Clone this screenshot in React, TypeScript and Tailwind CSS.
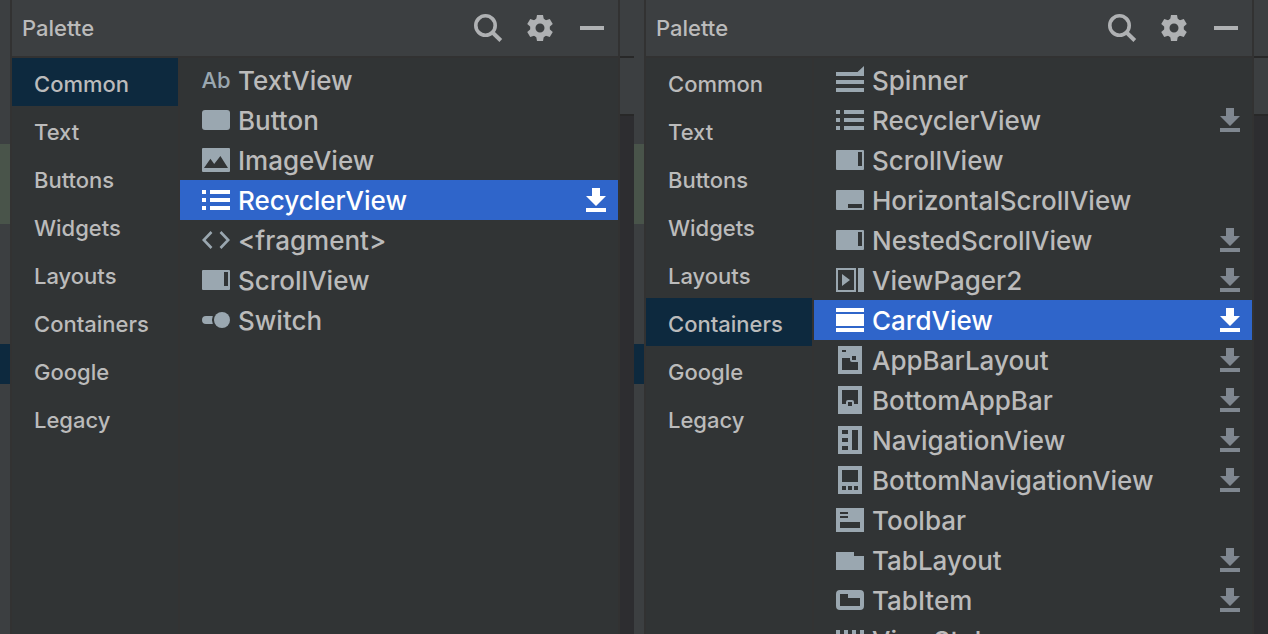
import { useState } from 'react';
import type { ReactNode } from 'react';

type Item = { name: string; icon: string; download?: boolean };

const categories = ['Common', 'Text', 'Buttons', 'Widgets', 'Layouts', 'Containers', 'Google', 'Legacy'];

const commonItems: Item[] = [
  { name: 'TextView', icon: 'text' },
  { name: 'Button', icon: 'button' },
  { name: 'ImageView', icon: 'image' },
  { name: 'RecyclerView', icon: 'recycler', download: true },
  { name: '<fragment>', icon: 'fragment' },
  { name: 'ScrollView', icon: 'scroll' },
  { name: 'Switch', icon: 'switch' },
];

const containerItems: Item[] = [
  { name: 'Spinner', icon: 'spinner' },
  { name: 'RecyclerView', icon: 'recycler', download: true },
  { name: 'ScrollView', icon: 'scroll' },
  { name: 'HorizontalScrollView', icon: 'horizontal' },
  { name: 'NestedScrollView', icon: 'scroll', download: true },
  { name: 'ViewPager2', icon: 'pager', download: true },
  { name: 'CardView', icon: 'card', download: true },
  { name: 'AppBarLayout', icon: 'appbar', download: true },
  { name: 'BottomAppBar', icon: 'bottombar', download: true },
  { name: 'NavigationView', icon: 'navigation', download: true },
  { name: 'BottomNavigationView', icon: 'bottomnav', download: true },
  { name: 'Toolbar', icon: 'toolbar' },
  { name: 'TabLayout', icon: 'tablayout', download: true },
  { name: 'TabItem', icon: 'tabitem', download: true },
  { name: 'ViewStub', icon: 'stub' },
];

// Component glyphs, all on a 32x32 grid. Holes are cut with the evenodd rule.
const glyphs: Record<string, ReactNode> = {
  button: <rect x="2" y="6" width="28" height="20" rx="3" />,
  image: <path d="M3 4h26a1 1 0 0 1 1 1v22a1 1 0 0 1-1 1H3a1 1 0 0 1-1-1V5a1 1 0 0 1 1-1zM4 24h24l-7.600-12-6.200 8-3.800-5.200z" />,
  recycler: <path d="M2 6h4v4H2zM10 6h20v4H10zM2 14h4v4H2zM10 14h20v4H10zM2 22h4v4H2zM10 22h20v4H10z" />,
  fragment: <path d="M11.500 8 3.800 16l7.700 8M20.500 8l7.700 8-7.700 8" fill="none" stroke="currentColor" strokeWidth="2.600" />,
  scroll: <path d="M3 6h26a1 1 0 0 1 1 1v18a1 1 0 0 1-1 1H3a1 1 0 0 1-1-1V7a1 1 0 0 1 1-1zM24 8v14h4V8z" />,
  horizontal: <path d="M3 6h26a1 1 0 0 1 1 1v18a1 1 0 0 1-1 1H3a1 1 0 0 1-1-1V7a1 1 0 0 1 1-1zM14 20v4h14v-4z" />,
  switch: (
    <>
      <path d="M6 12h6.800a10 10 0 0 0 0 8H6a4 4 0 0 1 0-8z" />
      <circle cx="22" cy="16" r="8" />
    </>
  ),
  spinner: <path d="M2 8h21.500L30 2v10H2zM2 16h28v4H2zM2 24h28v4H2z" />,
  pager: <path d="M2 4h20v24H2zM4 6v20h16V6zM8 10l8 6-8 6zM24 4h6v24h-6z" />,
  card: <path d="M2 4h28v4H2zM2 10h28v12H2zM2 24h28v4H2z" />,
  appbar: <path d="M4 2h24v28H4zM8 6v2h4V6zM8 14v12h16v-8h-6a2 2 0 0 1-2-2v-2zM18 12v4h4v-4z" />,
  bottombar: <path d="M4 2h24v28H4zM8 6v14h4v-2a2 2 0 0 1 2-2h4a2 2 0 0 1 2 2v2h4V6zM14 18v4h4v-4z" />,
  navigation: <path d="M4 2h24v28H4zM8 6v4h6V6zM8 14v4h6v-4zM8 22v4h6v-4zM18 6v20h6V6z" />,
  bottomnav: <path d="M4 2h24v28H4zM8 6v12h16V6zM8 22v4h4v-4zM14 22v4h4v-4zM20 22v4h4v-4z" />,
  toolbar: <path d="M2 4h28v24H2zM6 8v2h8V8zM6 12v2h8v-2zM6 18v6h20v-6z" />,
  tablayout: <path d="M2 8h18v4h10v14H2z" />,
  tabitem: <path d="M6 6h20a4 4 0 0 1 4 4v12a4 4 0 0 1-4 4H6a4 4 0 0 1-4-4V10a4 4 0 0 1 4-4zM6 10v12h20v-8H14v-4z" />,
  stub: <path d="M2 6h4v20H2zM10 6h4v20h-4zM18 6h4v20h-4zM26 6h4v20h-4z" />,
};

function Icon({ children }: { children: ReactNode }) {
  return (
    <svg viewBox="0 0 32 32" className="size-8 shrink-0" fill="currentColor" fillRule="evenodd" aria-hidden="true">
      {children}
    </svg>
  );
}

function ItemIcon({ icon }: { icon: string }) {
  if (icon === 'text') {
    return <span className="flex size-8 shrink-0 items-center justify-center text-[22px]" aria-hidden="true">Ab</span>;
  }
  return <Icon>{glyphs[icon]}</Icon>;
}

function PaletteHeader() {
  return (
    <header className="flex h-14 shrink-0 items-center gap-5 bg-[#3c3f41] px-[10px]">
      <h2 className="flex-1 text-[22px]">Palette</h2>
      <button type="button" aria-label="Search" className="text-[#afb1b3]">
        <Icon>
          <circle cx="13.500" cy="13.500" r="9.700" fill="none" stroke="currentColor" strokeWidth="3.600" />
          <path d="M20 20l8.800 8.500" fill="none" stroke="currentColor" strokeWidth="4" />
        </Icon>
      </button>
      <button type="button" aria-label="Settings" className="text-[#afb1b3]">
        <Icon>
          <circle cx="16" cy="16" r="7.200" fill="none" stroke="currentColor" strokeWidth="5.400" />
          {[0, 60, 120, 180, 240, 300].map((angle) => (
            <path key={angle} d="M13 3h6l1 5.500h-8z" transform={`rotate(${angle} 16 16)`} />
          ))}
        </Icon>
      </button>
      <button type="button" aria-label="Hide" className="text-[#afb1b3]">
        <Icon>
          <path d="M4 14h24v4H4z" />
        </Icon>
      </button>
    </header>
  );
}

function PaletteRow({ item, selected, onSelect }: { item: Item; selected: boolean; onSelect: () => void }) {
  return (
    <li className={selected ? 'flex h-10 items-center bg-[#2f65ca] pr-[6px] pl-5 text-white' : 'flex h-10 items-center pr-[6px] pl-5'}>
      <button type="button" onClick={onSelect} className="flex flex-1 items-center gap-[6px] text-left">
        <span className={selected ? 'text-white' : 'text-[#9aa7b0]'}>
          <ItemIcon icon={item.icon} />
        </span>
        <span className="pt-[2px] text-[26px] leading-[38px] whitespace-nowrap">{item.name}</span>
      </button>
      {item.download && (
        <button type="button" aria-label={`Download ${item.name}`} className={selected ? 'text-white' : 'text-[#7f8790]'}>
          <Icon>
            <path d="M12 4h8v8h6L16 22 6 12h6zM6 24h20v4H6z" />
          </Icon>
        </button>
      )}
    </li>
  );
}

type PaletteProps = { items: Item[]; initialCategory: string; initialItem: string };

function Palette({ items, initialCategory, initialItem }: PaletteProps) {
  const [category, setCategory] = useState(initialCategory);
  const [selected, setSelected] = useState(initialItem);

  return (
    <section className="flex min-w-0 overflow-hidden">
      {/* Edge of the project tree */}
      <div className="flex w-[10px] shrink-0 flex-col bg-[#3c3f41]">
        <div className="mt-36 h-20 bg-[#49544a]" />
        <div className="mt-[120px] h-10 bg-[#0d293e]" />
      </div>

      <div className="flex min-w-0 flex-1 flex-col border-x-2 border-[#323232] bg-[#313435]">
        <PaletteHeader />
        <div className="flex min-h-0 flex-1 border-t-2 border-[#323232]">
          <nav className="w-[168px] shrink-0 border-r-2 border-[#333333]">
            {categories.map((name) => (
              <button
                key={name}
                type="button"
                onClick={() => setCategory(name)}
                className={
                  name === category
                    ? 'block h-12 w-full bg-[#0d293e] pt-1 pl-[22px] text-left text-[22px]'
                    : 'block h-12 w-full pt-1 pl-[22px] text-left text-[22px]'
                }
              >
                {name}
              </button>
            ))}
          </nav>
          <ul className="min-w-0 flex-1 pt-[2px]">
            {items.map((item) => (
              <PaletteRow
                key={item.name}
                item={item}
                selected={item.name === selected}
                onSelect={() => setSelected(item.name)}
              />
            ))}
          </ul>
        </div>
      </div>

      {/* Edge of the design surface */}
      <div className="flex w-[14px] shrink-0 flex-col bg-[#2d2d30]">
        <div className="h-[58px] border-b-2 border-[#282828] bg-[#3c3f41]" />
        <div className="h-[58px] border-b-2 border-[#282828] bg-[#3c3f41]" />
      </div>
    </section>
  );
}

export default function App() {
  return (
    <main className="grid h-screen grid-cols-2 overflow-hidden bg-[#313435] font-['Inter',sans-serif] font-medium text-[#bbbbbb]">
      <Palette items={commonItems} initialCategory="Common" initialItem="RecyclerView" />
      <Palette items={containerItems} initialCategory="Containers" initialItem="CardView" />
    </main>
  );
}
